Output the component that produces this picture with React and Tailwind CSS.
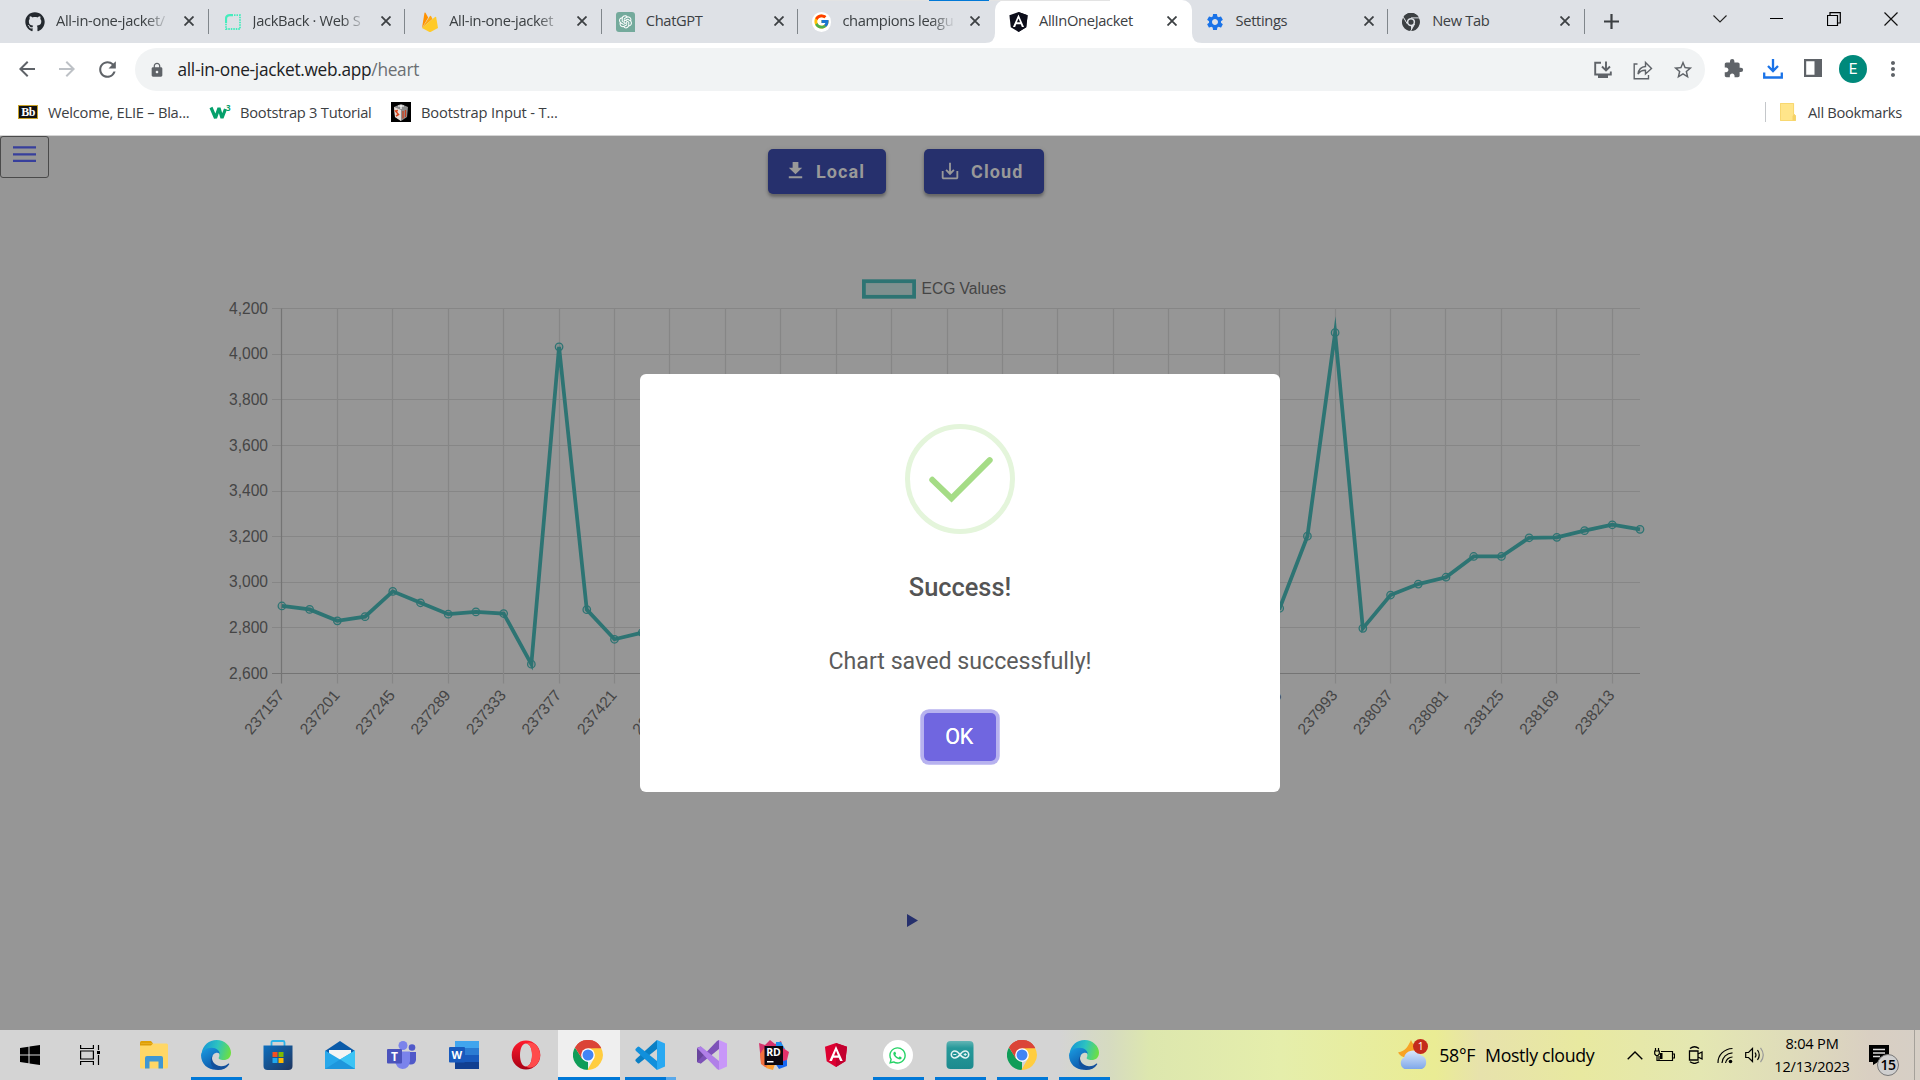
import React from "react";
import { FaGithub, FaWhatsapp } from "react-icons/fa";
import { AiOutlineOpenAI } from "react-icons/ai";
import { FcGoogle } from "react-icons/fc";
import {
  MdArrowBack, MdArrowForward, MdRefresh, MdLock, MdStarBorder, MdExtension,
  MdMoreVert, MdDownload, MdSaveAlt, MdSettings,
} from "react-icons/md";

const UI = "font-['Open_Sans','Noto_Sans',sans-serif]";

/* ---------- logos ---------- */

function ChromeLogo({ className = "", mono = false }) {
  const c = mono
    ? ["#3c4043", "#3c4043", "#3c4043", "#3c4043", "#dee1e6"]
    : ["#db4437", "#0f9d58", "#ffcd40", "#4285f4", "#fff"];
  return (
    <svg viewBox="0 0 48 48" className={className}>
      <path d="M24 24 L3.2 12 A24 24 0 0 1 44.8 12 Z" fill={c[0]} />
      <path d="M24 24 L24 48 A24 24 0 0 1 3.2 12 L14.5 29.5 Z" fill={c[1]} />
      <path d="M24 13 L44.8 12.5 A24 24 0 0 1 23 48 L33.5 29.5 Z" fill={c[2]} />
      <path d="M3.2 12 L14.5 30 L24 13 L45 13 L44.8 12 A24 24 0 0 0 3.2 12Z" fill={c[0]} />
      {mono && <path d="M24 13 H46 M14.5 29.5 L3.5 11 M33.5 29.5 L23 48" stroke="#dee1e6" strokeWidth="2.6" />}
      <circle cx="24" cy="24" r="11" fill={c[4]} />
      <circle cx="24" cy="24" r={mono ? 7 : 8.8} fill={c[3]} />
    </svg>
  );
}

function EdgeLogo({ className = "" }) {
  return (
    <svg viewBox="0 0 48 48" className={className}>
      <defs>
        <linearGradient id="edgeTop" x1="0" y1="0.4" x2="1" y2="0.6">
          <stop offset="0" stopColor="#1597d6" />
          <stop offset="0.5" stopColor="#2dc3c0" />
          <stop offset="1" stopColor="#6ee03f" />
        </linearGradient>
        <linearGradient id="edgeLeft" x1="0" y1="0" x2="0.6" y2="1">
          <stop offset="0" stopColor="#1b9de2" />
          <stop offset="1" stopColor="#0c55a8" />
        </linearGradient>
      </defs>
      <path d="M1 21 C3 8 13 0 25 0 C38 0 48 10 48 20 C48 28 43 32 36 32 C31 32 27 30 28.500 28 C31 24 29 15 18 15 C9 15 3 18 1 24Z" fill="url(#edgeTop)" />
      <path d="M0 24 C2 17 9 12.500 17 12.500 C25 12.500 30 18 30 22 C25 18 18 22 17.500 29 C17 38 24 43 32 46 C18 51 0 43 0 24Z" fill="url(#edgeLeft)" />
      <path d="M19 24 C15 31 20 41 32 42 C38 42 41 39.500 44 37.500 C45 37.500 45.500 38 45 39 C41 45 35 48 27 48 C16 46 12 32 19 24Z" fill="#12509c" />
    </svg>
  );
}

function AngularShield({ className = "", left, right }) {
  return (
    <svg viewBox="0 0 48 50" className={className}>
      <path d="M24 0 L47 8 L43.500 38 L24 50 L4.500 38 L1 8Z" fill={left} />
      <path d="M24 0 L47 8 L43.500 38 L24 50Z" fill={right} />
      <path d="M24 6 L10 37.500 H15.500 L18.300 30.500 H29.700 L32.500 37.500 H38Z M24 16 L28 25.800 H20Z" fill="#fff" fillRule="evenodd" />
    </svg>
  );
}

function Explorer() {
  return (
    <svg viewBox="0 0 28 28" className="size-7">
      <path d="M0 1.500 Q0 0 1.500 0 H11 L13 2.500 V6 H0Z" fill="#e0a106" />
      <rect y="2.500" width="28" height="25" rx="1.500" fill="#ffd766" />
      <path d="M0 2.500 H13 L11 4.500 H0Z" fill="#dd9d08" />
      <path d="M5 27.500 V17 Q5 15 7 15 H21 Q23 15 23 17 V27.500 H18.500 V20.500 H9.500 V27.500Z" fill="#3f97d3" />
    </svg>
  );
}

function Store() {
  return (
    <svg viewBox="0 0 30 30" className="h-[30px] w-[30px]">
      <defs>
        <linearGradient id="store" x1="0" y1="0" x2="1" y2="1">
          <stop offset="0" stopColor="#0d6fbf" />
          <stop offset="1" stopColor="#20355e" />
        </linearGradient>
      </defs>
      <path d="M8.500 6.500 V2.500 Q8.500 1 10 1 H20 Q21.500 1 21.500 2.500 V6.500" fill="none" stroke="#2cb4ea" strokeWidth="1.800" />
      <path d="M.5 5.500 H29.500 V26 Q29.500 30 25.500 30 H4.500 Q.5 30 .5 26Z" fill="url(#store)" />
      <path d="M9.500 12 H14.500 V17 H9.500Z" fill="#f25022" />
      <path d="M15.500 12 H20.500 V17 H15.500Z" fill="#7fba00" />
      <path d="M9.500 18 H14.500 V23 H9.500Z" fill="#1fa8ee" />
      <path d="M15.500 18 H20.500 V23 H15.500Z" fill="#ffb900" />
    </svg>
  );
}

function Mail() {
  return (
    <svg viewBox="0 0 30 28" className="h-7 w-[30px]">
      <path d="M0 10 L15 0 L30 10 L15 20Z" fill="#0a5aa8" />
      <path d="M4 9 H26 V18 L15 24 L4 18Z" fill="#f4f4f4" />
      <path d="M0 9.500 L15 18.500 L30 9.500 V28 H0Z" fill="#28a8ea" />
      <path d="M30 9.500 L15 18.500 L30 28Z" fill="#3cc4f5" />
      <path d="M0 28 L15 18.500 L30 28Z" fill="#1e96dc" />
    </svg>
  );
}

function Teams() {
  return (
    <svg viewBox="0 0 30 28" className="h-7 w-[30px]">
      <circle cx="25" cy="6.500" r="3.300" fill="#5059c9" />
      <path d="M19 11 H29 V19 Q28 24 23 23.500 Q19 23 19 19Z" fill="#5059c9" />
      <circle cx="16" cy="4.500" r="4.500" fill="#7b83eb" />
      <path d="M8 10.500 H23 V20 Q22 28 15.500 28 Q9 27 8 20Z" fill="#7b83eb" />
      <rect y="8" width="15" height="14.500" rx="1" fill="#4b53bc" />
      <text x="7.500" y="19.500" textAnchor="middle" fontSize="12" fontWeight="700" fill="#fff" fontFamily="Open Sans">T</text>
    </svg>
  );
}

function Word() {
  return (
    <svg viewBox="0 0 30 28" className="h-7 w-[30px]">
      <path d="M6 0 H30 V7 H6Z" fill="#41a5ee" />
      <path d="M6 7 H30 V14 H6Z" fill="#2b7cd3" />
      <path d="M6 14 H30 V21 H6Z" fill="#185abd" />
      <path d="M6 21 H30 V28 H6Z" fill="#103f91" />
      <rect y="6" width="16" height="15.500" rx="1" fill="#185abd" />
      <text x="7.800" y="18" textAnchor="middle" fontSize="11" fontWeight="700" fill="#fff" fontFamily="Open Sans">W</text>
    </svg>
  );
}

function Opera() {
  return (
    <svg viewBox="0 0 30 30" className="h-[30px] w-[30px]">
      <defs>
        <linearGradient id="opera" x1="0" y1="0" x2="0" y2="1">
          <stop offset="0" stopColor="#ff1b2d" />
          <stop offset="1" stopColor="#a70014" />
        </linearGradient>
      </defs>
      <path fillRule="evenodd" d="M15 0.500 A14.300 14.500 0 1 0 15 29.500 A14.300 14.500 0 1 0 15 .5Z M15 3.500 C19 3.500 21 9 21 15 C21 21 19 26.500 15 26.500 C11 26.500 9 21 9 15 C9 9 11 3.500 15 3.500Z" fill="url(#opera)" />
      <path d="M15 3.500 C18 1.500 21 2.500 24.500 4.500 C31 11 30.500 20 24.500 25.500 C21 28 18 28.500 15 26.500 C19 26 21 21 21 15 C21 9 19 4 15 3.500Z" fill="#ff4b4b" />
    </svg>
  );
}

function VsCode() {
  return (
    <svg viewBox="0 0 30 30" className="h-[30px] w-[30px]">
      <path d="M22 0 L30 3.500 V26.500 L22 30Z" fill="#29a9f2" />
      <path d="M22 0 V9 L4.500 23 Q3.500 24 2.500 23 L.5 21 Q0 20 1 19Z" fill="#0a7fc4" />
      <path d="M22 30 V21 L4.500 7 Q3.500 6 2.500 7 L.5 9 Q0 10 1 11Z" fill="#1190dc" />
    </svg>
  );
}

function VisualStudio() {
  return (
    <svg viewBox="0 0 30 30" className="h-[30px] w-[30px]">
      <path d="M0 8 L3.500 6.500 L7 10 V20 L3.500 23.500 L0 22Z" fill="#68459c" />
      <path d="M22 0 V9 L4 23.500 L0 22 L20 1Z" fill="#7d52b8" />
      <path d="M22 30 V21 L4 6.500 L0 8 L20 29Z" fill="#b07fe8" />
      <path d="M22 0 L30 3.500 V26.500 L22 30Z" fill="#c897f8" />
    </svg>
  );
}

function Rider() {
  return (
    <svg viewBox="0 0 30 30" className="h-[30px] w-[30px]">
      <path d="M0 3 L6 5 L11 0 L16 4 L22 1 L24 8 L20 22 L2 22Z" fill="#d6336c" />
      <path d="M17 2 L22 2 L26 9 H17Z" fill="#1c8ff0" />
      <path d="M24 8 L30 12 L28 20 L22 24Z" fill="#e5306b" />
      <path d="M1 14 L5 8 L10 22 L12 29 L6 27 L2 24Z" fill="#f2703f" />
      <path d="M9 23 L16 24 L14 30 L7 28Z" fill="#ff9d2e" />
      <path d="M16 23 L28 20 L28 26 L20 29Z" fill="#1668f2" />
      <rect x="5.500" y="6" width="18.500" height="19" fill="#0d0710" />
      <text x="14.500" y="16" textAnchor="middle" fontSize="10.500" fontWeight="700" fill="#fff" fontFamily="Open Sans">RD</text>
      <path d="M8 21 H14.500 V22.500 H8Z" fill="#fff" />
    </svg>
  );
}

function Arduino() {
  return (
    <svg viewBox="0 0 28 28" className="h-7 w-7">
      <defs>
        <linearGradient id="ard" x1="0" y1="0" x2="0" y2="1">
          <stop offset="0" stopColor="#63b5b5" />
          <stop offset="0.25" stopColor="#27999a" />
          <stop offset="1" stopColor="#1c8a8e" />
        </linearGradient>
      </defs>
      <rect x=".5" width="27" height="28" rx="4" fill="url(#ard)" />
      <path d="M14 13.500 C12 10.800 10.700 10 8.800 10 A3.500 3.500 0 0 0 8.800 17 C10.700 17 12 16.200 14 13.500 C16 10.800 17.300 10 19.200 10 A3.500 3.500 0 0 1 19.200 17 C17.300 17 16 16.200 14 13.500Z" fill="none" stroke="#e2f2f2" strokeWidth="1.600" />
      <path d="M7.300 13.500 H10.300 M17.700 13.500 H20.700 M19.200 12 V15" stroke="#e2f2f2" strokeWidth="1" />
    </svg>
  );
}

function WindowsLogo() {
  return (
    <svg viewBox="0 0 20 20" className="h-5 w-5">
      <path d="M0 3 L8.500 1.700 V9.500 H0Z M9.500 1.500 L20 0 V9.500 H9.500Z M0 10.500 H8.500 V18.300 L0 17Z M9.500 10.500 H20 V20 L9.500 18.500Z" fill="#000" />
    </svg>
  );
}

function TaskView() {
  return (
    <svg viewBox="0 0 20 20" className="h-5 w-5">
      <path d="M.6 0 V3.500 H13.400 V0 M.6 20 V16.500 H13.400 V20 M.6 6 H13.400 V14 H.6Z M18.500 0 V5 M18.500 10 V20" fill="none" stroke="#000" strokeWidth="1.200" />
      <rect x="17" y="6" width="3" height="3" />
    </svg>
  );
}

/* ---------- browser ---------- */

function Railway() {
  return (
    <svg viewBox="0 0 16 16" className="ml-0.5 h-4 w-4">
      <path d="M1 9 V5 Q1 1.200 5 1.200 H8" fill="none" stroke="#45ecbd" strokeWidth="2.200" />
      <path d="M9 1.200 H15 V15 H1 V9" fill="none" stroke="#45ecbd" strokeWidth="1.800" strokeDasharray="1.500 1" />
    </svg>
  );
}

function Firebase() {
  return (
    <svg viewBox="0 0 16 20" className="ml-1 h-5 w-4">
      <path d="M0 16 L2.500 .8 Q3 0 3.500 .8 L6.200 5.500Z" fill="#ff9100" />
      <path d="M0 16 L8 4 Q8.500 3.400 9 4 L10.500 7Z" fill="#ffa712" />
      <path d="M0 16 L13 5 Q14 4.500 14.200 5.500 L16 16 L9 19.700 Q8 20.200 7 19.700Z" fill="#ffca28" />
    </svg>
  );
}

const TABS = [
  { title: "All-in-one-jacket/", icon: <FaGithub className="size-5 text-[#24292f]" />, faded: true },
  { title: "JackBack · Web S", icon: <Railway />, faded: true },
  { title: "All-in-one-jacket", icon: <Firebase />, faded: true },
  {
    title: "ChatGPT",
    icon: (
      <span className="ml-px flex size-5 items-center justify-center rounded-[3px] rounded-br-none bg-[#74aa9c]">
        <AiOutlineOpenAI className="size-[17px] text-white" />
      </span>
    ),
  },
  {
    title: "champions leagu",
    faded: true,
    icon: (
      <span className="ml-px flex size-5 items-center justify-center rounded-full bg-white">
        <FcGoogle className="size-[17px]" />
      </span>
    ),
  },
  { title: "AllInOneJacket", active: true, icon: <AngularShield className="ml-px h-5 w-5" left="#0c0d1a" right="#0c0d1a" /> },
  { title: "Settings", icon: <MdSettings className="size-5 text-[#1a73e8]" /> },
  { title: "New Tab", icon: <ChromeLogo mono className="size-[18px]" /> },
];

function Cross({ className = "" }) {
  return (
    <svg viewBox="0 0 10 10" className={className}>
      <path d="M.5 .5 L9.500 9.500 M9.500 .5 L.5 9.500" stroke="currentColor" strokeWidth="1.800" />
    </svg>
  );
}

function Tab({ title, icon, active, divider, faded }) {
  return (
    <div
      className={
        "relative flex h-[43px] w-[196.6px] shrink-0 items-center pl-[13px] " +
        (active ? "rounded-t-[10px] bg-white" : "")
      }
    >
      {active && (
        <>
          <svg viewBox="0 0 10 10" className="absolute bottom-0 -left-2.5 size-2.5"><path d="M10 0 V10 H0 Q10 10 10 0Z" fill="#fff" /></svg>
          <svg viewBox="0 0 10 10" className="absolute bottom-0 -right-2.5 size-2.5"><path d="M0 0 V10 H10 Q0 10 0 0Z" fill="#fff" /></svg>
        </>
      )}
      <span className="flex size-5 shrink-0 items-center justify-center">{icon}</span>
      <span
        className={
          "-mt-0.5 ml-[11px] w-[114px] shrink-0 whitespace-nowrap text-[14.7px] tracking-[-0.35px] text-[#3c4043] " +
          (faded ? "[mask-image:linear-gradient(to_right,#000_78%,transparent)]" : "")
        }
      >
        {title}
      </span>
      <Cross className="-mt-px ml-[14px] size-2.5 shrink-0 text-[#3c4043]" />
      {divider && <span className="absolute right-0 top-[9px] h-[25px] w-px bg-[#80868b]" />}
    </div>
  );
}

function TabStrip() {
  return (
    <div className="relative flex h-[43px] bg-[#dee1e6] pl-3">
      {TABS.map((t, i) => (
        <Tab key={i} {...t} divider={i !== 4 && i !== 5} />
      ))}
      <div className="flex w-[53px] items-center justify-center">
        <svg viewBox="0 0 15 15" className="-mt-px size-[15px]"><path d="M7.500 0 V15 M0 7.500 H15" stroke="#3c4043" strokeWidth="2.200" /></svg>
      </div>
      <div className="absolute right-0 top-0 flex h-[37px] items-center text-black">
        <span className="flex w-[57px] justify-center">
          <svg viewBox="0 0 14 8" className="h-2 w-3.5"><path d="M.5 .5 L7 7 L13.500 .5" fill="none" stroke="#222" strokeWidth="1.100" /></svg>
        </span>
        <span className="flex w-[57px] justify-center"><span className="h-px w-[13px] bg-black" /></span>
        <span className="flex w-[57px] justify-center">
          <svg viewBox="0 0 14 14" className="size-3.5"><path d="M.5 3.500 H10.500 V13.500 H.5Z M3 3 V.7 H13.300 V11 H11" fill="none" stroke="#000" strokeWidth="1.200" /></svg>
        </span>
        <span className="flex w-[58px] justify-center">
          <svg viewBox="0 0 14 14" className="size-3.5"><path d="M.5 .5 L13.500 13.500 M13.500 .5 L.5 13.500" stroke="#111" strokeWidth="1.200" /></svg>
        </span>
      </div>
      <div className="absolute left-[809px] top-0 h-px w-[301px] bg-[#e3e3e3]">
        <div className="ml-[120px] h-px w-[60px] bg-[#0078d7]" />
      </div>
    </div>
  );
}

function Toolbar() {
  return (
    <div className="flex h-[52px] items-center bg-white text-[#5f6368]">
      <div className="flex w-[135px] shrink-0 pl-[7px]">
        <span className="flex w-10 justify-center"><MdArrowBack className="size-6" /></span>
        <span className="flex w-10 justify-center text-[#bdc1c6]"><MdArrowForward className="size-6" /></span>
        <span className="flex w-10 justify-center"><MdRefresh className="size-[25px]" /></span>
      </div>
      <div className="flex h-[43px] w-[1570px] shrink-0 items-center rounded-full bg-[#f1f3f4] pl-[14px]">
        <MdLock className="mt-0.5 size-4" />
        <span className="mt-px ml-[12.5px] whitespace-nowrap text-[17.3px] tracking-[-0.3px] text-[#202124]">
          all-in-one-jacket.web.app<span className="text-[#6b6f73]">/heart</span>
        </span>
        <div className="ml-auto flex items-center pr-0.5">
          <span className="flex w-10 justify-center">
            <svg viewBox="0 0 18 18" className="mt-0.5 size-[18px]">
              <path d="M7 1.800 H1.200 V13.500 H16.800 V10.500" fill="none" stroke="#5f6368" strokeWidth="1.900" />
              <path d="M4 14 H14 V17 H4Z" fill="#5f6368" />
              <path d="M12 .5 V9 M8 5.500 L12 9.500 L16 5.500" fill="none" stroke="#5f6368" strokeWidth="1.900" />
            </svg>
          </span>
          <span className="flex w-10 justify-center">
            <svg viewBox="0 0 20 20" className="mt-0.5 size-5">
              <path d="M4.500 4 H1.200 V18.800 H15.500 V15 M5 14 Q6 7 12.500 6.500 V2.500 L18.500 8.500 L12.500 14 V10.300 Q8 10 5 14Z" fill="none" stroke="#5f6368" strokeWidth="1.400" />
            </svg>
          </span>
          <span className="flex w-10 justify-center"><MdStarBorder className="mt-px size-[22px]" /></span>
        </div>
      </div>
      <div className="flex items-center pl-2">
        <span className="flex w-10 justify-center"><MdExtension className="-mt-0.5 size-[21px]" /></span>
        <span className="flex w-10 justify-center">
          <svg viewBox="0 0 20 20" className="-mt-px size-5">
            <path d="M10 0 V11 M5 7 L10 12 L15 7 M1.200 13.500 V18.500 H18.800 V13.500" fill="none" stroke="#1a73e8" strokeWidth="2.300" />
          </svg>
        </span>
        <span className="flex w-10 justify-center">
          <svg viewBox="0 0 18 18" className="-mt-0.5 size-[18px]"><path fillRule="evenodd" d="M0 0 H18 V18 H0Z M2.200 2.200 V15.800 H10.500 V2.200Z" fill="#5f6368" /></svg>
        </span>
        <span className="flex w-10 justify-center">
          <span className="flex size-7 items-center justify-center rounded-full bg-[#00897b] font-[Roboto] text-[15px] text-white">E</span>
        </span>
        <span className="flex w-[39px] justify-center"><MdMoreVert className="size-6" /></span>
      </div>
    </div>
  );
}

function Bookmarks() {
  return (
    <div className="flex h-[41px] items-center border-b border-[#d5d5d5] bg-white pb-1.5 pl-[18px] text-[14.7px] whitespace-nowrap text-[#3c4043]">
      <span className="flex h-3.5 w-5 items-center justify-center border border-[#c9a227] bg-[#111] font-['Liberation_Serif'] text-[12px] leading-none font-bold tracking-[-0.5px] text-white">Bb</span>
      <span className="ml-2.5 w-[162px] tracking-[-0.25px]">Welcome, ELIE – Bla...</span>
      <svg viewBox="0 0 20 16" className="h-4 w-5 overflow-visible">
        <path d="M1 3.500 L5.500 14 L9 4 L12 14 L15.500 5" fill="none" stroke="#04a06b" strokeWidth="3.200" strokeLinejoin="bevel" />
        <text x="16" y="6.500" fontSize="8" fontWeight="700" fill="#04a06b" fontFamily="Open Sans">3</text>
      </svg>
      <span className="ml-2.5 w-[151px] tracking-[-0.25px]">Bootstrap 3 Tutorial</span>
      <svg viewBox="0 0 20 20" className="size-5">
        <rect width="20" height="20" fill="#000" />
        <path d="M3 5 L10 2 L17 5 L16 15 L10 19 L4 15Z" fill="#8d8d8d" />
        <path d="M3 5 L10 8 V19 L4 15Z" fill="#e6dcd6" />
        <path d="M7 8.500 L4.500 9 L7.500 12.500 L5 14" stroke="#d8451d" strokeWidth="1.500" fill="none" />
        <path d="M12 9 V16.500 M14.500 8 V15" stroke="#c83d1b" strokeWidth="1.300" />
        <path d="M7 4 H13 M10 3 V7" stroke="#fff" strokeWidth="1.200" />
      </svg>
      <span className="ml-2.5 tracking-[-0.15px]">Bootstrap Input - T...</span>
      <span className="ml-auto h-5 w-px bg-[#c4c7ca]" />
      <svg viewBox="0 0 16 18" className="ml-3.5 h-[18px] w-4">
        <path d="M1 0 H13 Q14 0 14 1 V11 L16 13 V17 Q16 18 15 18 H1 Q0 18 0 17 V1 Q0 0 1 0Z" fill="#ffe58a" />
        <path d="M.4 .4 H13.600 V11 L15.600 13 V17.600 H.4Z" fill="none" stroke="#f5d267" strokeWidth=".8" />
        <path d="M14 11 L12.500 13 V17.500 H15.500 V12.500Z" fill="#f5d267" />
      </svg>
      <span className="ml-3 mr-[18px] tracking-[-0.3px]">All Bookmarks</span>
    </div>
  );
}

/* ---------- ECG chart ---------- */

const FIRST_LABEL = 237157;
const ECG = [
  2896, 2881, 2831, 2849, 2960, 2910, 2860, 2870, 2863, 2641, 4032, 2880, 2750, 2779, 2800, 2815, 2830, 2845, 2850,
  2860, 2870, 2880, 2885, 2890, 2900, 2905, 2910, 2905, 2900, 2895, 2890, 2880, 2875, 2870, 2865, 2870, 2886, 3202,
  4094, 2798, 2944, 2992, 3022, 3113, 3113, 3195, 3197, 3226, 3252, 3232,
];
const LEFT = 281.9;
const TOP = 308.5;
const BOTTOM = 673.5;
const RIGHT = 1640;
const OX = 220;
const OY = 260;
const px = (i) => LEFT + (i * (RIGHT - LEFT)) / 49;
const py = (v) => BOTTOM - ((v - 2600) * (BOTTOM - TOP)) / 1600;
const snap = (n) => Math.floor(n) + 0.5;

function Chart() {
  const ticks = [2600, 2800, 3000, 3200, 3400, 3600, 3800, 4000, 4200];
  const evens = ECG.map((_, i) => i).filter((i) => i % 2 === 0);
  return (
    <svg viewBox={`${OX} ${OY} 1440 500`} className="h-[500px] w-[1440px]" fontFamily="Liberation Sans, Arial, sans-serif" fontSize="15.600">
      <rect x="863.900" y="281.200" width="50.200" height="15.600" fill="#7f908f" stroke="#2d7473" strokeWidth="3.750" />
      <text x="921.500" y="293.500" fill="#454545">ECG Values</text>
      {ticks.map((v) => (
        <g key={v}>
          <path d={`M272 ${snap(py(v))} H${RIGHT}`} stroke={v === 2600 ? "#747474" : "#868686"} strokeWidth="1.200" />
          <text x="268" y={py(v) + 5.200} textAnchor="end" fill="#454545">{v.toLocaleString("en-US")}</text>
        </g>
      ))}
      {evens.map((i) => (
        <g key={i}>
          <path d={`M${snap(px(i))} ${TOP} V683.500`} stroke={i === 0 ? "#747474" : "#868686"} strokeWidth="1.200" />
          <text transform={`translate(${px(i) - 0.7} 692.300) rotate(-50)`} y="5" textAnchor="end" fill="#454545">
            {FIRST_LABEL + i * 22}
          </text>
        </g>
      ))}
      <polyline
        points={ECG.map((v, i) => `${px(i)},${py(v)}`).join(" ")}
        fill="none"
        stroke="#2d7473"
        strokeWidth="3.750"
        strokeMiterlimit="10"
      />
      {ECG.map((v, i) => (
        <circle key={i} cx={px(i)} cy={py(v)} r="3.750" fill="#2d7473" fillOpacity="0.15" stroke="#2d7473" strokeWidth="1.250" />
      ))}
    </svg>
  );
}

function ActionButton({ icon, label, className }) {
  return (
    <button
      className={
        "flex h-[45px] items-center rounded-[5px] bg-[#26306d] font-[Roboto] text-[18px] font-bold tracking-[1.1px] text-[#999] shadow-[0_3px_3px_rgba(0,0,0,0.25),0_1px_5px_rgba(0,0,0,0.15)] " +
        className
      }
    >
      {icon}
      {label}
    </button>
  );
}

function Dialog() {
  return (
    <div className="absolute left-[640px] top-[238px] flex h-[418px] w-[640px] flex-col items-center rounded-[6px] bg-white font-[Roboto] text-[#545454]">
      <svg viewBox="0 0 110 110" className="mt-[50px] size-[110px] shrink-0">
        <circle cx="55" cy="55" r="52.500" fill="none" stroke="#e4f5db" strokeWidth="5" />
        <path d="M27.300 55.800 L46.500 74.300 L84.700 36.200" fill="none" stroke="#a5dc86" strokeWidth="6" strokeLinecap="round" />
      </svg>
      <h2 className="mt-[37px] text-[25.4px] leading-[32px] font-medium">Success!</h2>
      <p className="mt-[42px] text-[23.2px] leading-[32px] text-[#5c5c5c]">Chart saved successfully!</p>
      <button className="mt-[36px] h-12 w-[72px] rounded-[5px] bg-[#7066e0] pr-0.5 text-[21.5px] tracking-[-0.4px] text-white [text-shadow:0_0_0.6px_#fff] shadow-[0_0_0_3.75px_rgba(112,102,224,0.5)]">
        OK
      </button>
    </div>
  );
}

function Page() {
  return (
    <main className="relative flex h-[894px] flex-col overflow-hidden bg-[#969696]">
      <div className="flex">
        <button className="flex h-[42px] w-[49px] justify-center rounded-[3px] border border-[#4a4a4a] pt-[9px]">
          <svg viewBox="0 0 23 17" className="h-[17px] w-[23px]">
            <path d="M0 1.300 H23 M0 8.300 H23 M0 14.800 H23" stroke="#373f9c" strokeWidth="2.300" />
          </svg>
        </button>
        <div className="mt-[13px] ml-[719px] flex gap-[38px]">
          <ActionButton className="w-[118px] pl-4" icon={<MdDownload className="mr-[9px] -mt-0.5 size-[23px]" />} label="Local" />
          <ActionButton className="w-[120px] pl-[15px]" icon={<MdSaveAlt className="mr-2.5 -mt-0.5 size-[22px]" />} label="Cloud" />
        </div>
      </div>
      <div className="mt-[66px] ml-[220px]">
        <Chart />
      </div>
      <svg viewBox="0 0 11 13" className="mt-[154px] ml-[907px] h-[13px] w-[11px]"><path d="M0 0 L11 6.500 L0 13Z" fill="#26306d" /></svg>
      <Dialog />
    </main>
  );
}

/* ---------- taskbar ---------- */

const APPS = [
  { icon: <Explorer /> },
  { icon: <EdgeLogo className="size-[30px]" />, open: true },
  { icon: <Store /> },
  { icon: <Mail /> },
  { icon: <Teams /> },
  { icon: <Word /> },
  { icon: <Opera /> },
  { icon: <ChromeLogo className="size-[30px]" />, focused: true },
  { icon: <VsCode />, stacked: true },
  { icon: <VisualStudio /> },
  { icon: <Rider /> },
  { icon: <AngularShield className="h-6 w-6" left="#dd0031" right="#c3002f" /> },
  {
    icon: (
      <span className="flex size-[30px] items-center justify-center rounded-full bg-white">
        <FaWhatsapp className="size-[19px] text-[#25d366]" />
      </span>
    ),
    open: true,
  },
  { icon: <Arduino />, open: true },
  { icon: <ChromeLogo className="size-[30px]" />, open: true },
  { icon: <EdgeLogo className="size-[30px]" />, open: true },
];

function AppButton({ icon, open, focused, stacked }) {
  return (
    <div className={"relative flex h-[50px] w-[62px] items-center justify-center pr-[3px] " + (focused ? "bg-[#efefef]" : "")}>
      {icon}
      {open && <span className="absolute bottom-0 left-[5px] h-[3px] w-[51px] bg-[#0078d7]" />}
      {focused && <span className="absolute bottom-0 left-0 h-[3px] w-full bg-[#0078d7]" />}
      {stacked && (
        <span className="absolute bottom-0 left-[5px] flex h-[3px] w-[51px] bg-[#5aa9ea]">
          <span className="h-[3px] w-[41px] bg-[#0078d7]" />
        </span>
      )}
    </div>
  );
}

function Weather() {
  return (
    <div className="relative h-[30px] w-[30px]">
      <svg viewBox="0 0 30 30" className="size-[30px]">
        <defs>
          <linearGradient id="cloud" x1="0" y1="0" x2="0" y2="1">
            <stop offset="0" stopColor="#d9e7fb" />
            <stop offset="1" stopColor="#7fa8ea" />
          </linearGradient>
        </defs>
        <path d="M13 0 C10 6 8 11 0 12.500 C3 17 6 18 11 17 C16 16 19 12 18 7 C16 5 14 3 13 0Z" fill="#f7a325" />
        <path d="M6.500 29 A6.500 6.500 0 0 1 6 17.500 A9 9 0 0 1 22.500 15 A7.500 7.500 0 0 1 24 29Z" fill="url(#cloud)" />
      </svg>
      <span className="absolute -top-px left-[15px] flex size-[15px] items-center justify-center rounded-full bg-[#c42b1c] text-[10.500px] leading-none text-white">1</span>
    </div>
  );
}

function Taskbar() {
  return (
    <footer className="relative flex h-[50px] items-center bg-[linear-gradient(to_right,#d4d4d4_0,#d4d4d4_1060px,#d6dbc0_1110px,#dde7ae_1150px,#e5eeab_1280px,#eaec94_1435px,#e7e2ac_1480px,#e8e9a0_1580px,#e4e7b2_1700px,#dfdcba_1790px,#d9cfc2_1870px,#d6cfc6_1920px)] text-black">
      <span className="flex w-[60px] justify-center"><WindowsLogo /></span>
      <span className="flex w-[60px] justify-center"><TaskView /></span>
      <div className="ml-1 flex">
        {APPS.map((a, i) => (
          <AppButton key={i} {...a} />
        ))}
      </div>
      <div className="ml-auto flex h-[50px] items-center whitespace-nowrap">
        <Weather />
        <span className="ml-[11px] text-[17.800px] tracking-[-0.35px]">58°F</span>
        <span className="ml-2.5 w-[139px] text-[17.800px] tracking-[-0.35px]">Mostly cloudy</span>
        <div className="flex items-center">
          <span className="flex w-[30px]"><svg viewBox="0 0 16 9" className="ml-[3px] h-[9px] w-4"><path d="M.7 8.300 L8 1 L15.300 8.300" fill="none" stroke="#000" strokeWidth="1.400" /></svg></span>
          <span className="flex w-[33px]">
            <svg viewBox="0 0 21 14" className="h-3.5 w-[21px]"><path d="M7 3.500 H18.500 V12.500 H5 V8 M19 6 H20.500 V10 H19 M1.500 0 V3 M4.500 0 V3 M.7 3 H5.300 V6 L4 7.500 H2 L.7 6Z M3 7.500 V12.500 H5" fill="none" stroke="#000" strokeWidth="1.200" /><rect x="6" y="5" width="2.500" height="6" /></svg>
          </span>
          <span className="flex w-[29px]">
            <svg viewBox="0 0 16 18" className="ml-px h-[18px] w-4"><path d="M1.500 5 H10 V14 H1.500Z M10 8 L14 6 V13 L10 11 M2 2.500 Q6.500 -1 11 2.500 M2 15.800 Q6.500 19 11 15.800" fill="none" stroke="#000" strokeWidth="1.300" /></svg>
          </span>
          <span className="flex w-[27px]">
            <svg viewBox="0 0 16 17" className="ml-px h-[17px] w-4"><path d="M1 16 A15 14 0 0 1 15.500 1.500 M5 16 A11 10.500 0 0 1 15.500 5.800 M8.500 16 A7 7 0 0 1 15.500 10" fill="none" stroke="#000" strokeWidth="1.200" /><circle cx="13.500" cy="14.500" r="1.800" /></svg>
          </span>
          <span className="flex w-[30px]">
            <svg viewBox="0 0 20 16" className="ml-0.5 h-4 w-5"><path d="M.7 5.500 H3.500 L7.500 1.500 V14.500 L3.500 10.500 H.7Z M10 5.500 Q12 8 10 10.500 M12.500 3 Q16 8 12.500 13" fill="none" stroke="#000" strokeWidth="1.200" /><path d="M15.500 .8 Q21 8 15.500 15.200" fill="none" stroke="#999" strokeWidth="1.200" /></svg>
          </span>
        </div>
        <div className="-mt-px flex w-[78px] flex-col items-center text-[14.6px] leading-[23px] tracking-[-0.2px]">
          <span>8:04 PM</span>
          <span>12/13/2023</span>
        </div>
        <div className="relative ml-[18px] h-[50px] w-[45px]">
          <svg viewBox="0 0 20 20" className="mt-[15px] h-5 w-5"><path d="M0 0 H20 V17 H9 L4 20 V17 H0Z" /><path d="M4 4.500 H16 M4 8 H16 M4 11.500 H11" stroke="#ddd" strokeWidth="1.300" /></svg>
          <span className="absolute left-[8px] top-6 flex size-[22px] items-center justify-center rounded-full border border-[#777] bg-[#cfcfcf] text-[14px] font-semibold leading-none tracking-[-0.4px]">15</span>
        </div>
        <span className="mr-[5px] h-[50px] w-px bg-[#a5a19a]" />
      </div>
    </footer>
  );
}

export default function App() {
  return (
    <div className={"flex h-[1080px] w-[1920px] flex-col overflow-hidden " + UI}>
      <TabStrip />
      <Toolbar />
      <Bookmarks />
      <Page />
      <Taskbar />
    </div>
  );
}
